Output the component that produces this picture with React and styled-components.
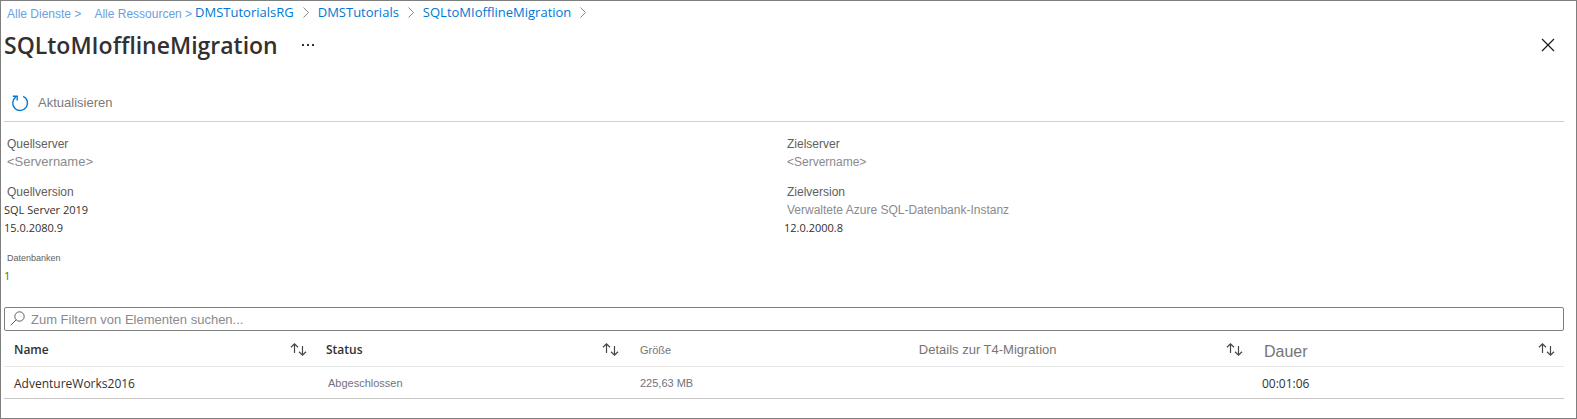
import React from "react";
import styled, { createGlobalStyle } from "styled-components";

const ui = `"Open Sans", "Noto Sans", sans-serif`;
const plain = `"Liberation Sans", Arial, sans-serif`;

const GlobalStyle = createGlobalStyle`
  *, *::before, *::after { box-sizing: border-box; }
  body { margin: 0; background: #fff; color: #323130; font-family: ${ui}; }
  button { border: 0; padding: 0; background: none; font: inherit; color: inherit; cursor: pointer; }
`;

const Blade = styled.main`
  min-height: 100vh;
  padding: 0 12px 12px 3px;
  border: 1px solid #7f7f7f;
`;

const Breadcrumb = styled.nav`
  display: flex;
  align-items: flex-start;
  height: 24px;
  padding-left: 3px;
`;

const Crumb = styled.a`
  margin-right: ${(p) => p.$gap || 0}px;
  font-family: ${(p) => (p.$light ? plain : ui)};
  font-size: ${(p) => (p.$light ? 12 : 13)}px;
  line-height: ${(p) => (p.$light ? 26 : 22)}px;
  color: ${(p) => (p.$light ? "#6ba0dc" : "#0078d4")};
  text-decoration: none;
  white-space: nowrap;
`;

const Chevron = styled.svg`
  width: 6px;
  height: 22px;
  margin: 0 9px;
  fill: none;
  stroke: #8a8886;
`;

const TitleBar = styled.header`
  display: flex;
  align-items: center;
  height: 40px;
`;

const Title = styled.h1`
  margin: 0 24px 0 0;
  font-size: 23px;
  font-weight: 600;
  line-height: 32px;
`;

const MoreButton = styled.button`
  display: flex;
  svg { width: 12px; height: 4px; fill: #323130; }
`;

const CloseButton = styled.button`
  display: flex;
  margin: 0 9px 0 auto;
  svg { width: 14px; height: 14px; stroke: #1b1a19; fill: none; }
`;

const Toolbar = styled.div`
  display: flex;
  align-items: center;
  height: 57px;
  padding: 20px 0 0 7px;
  border-bottom: 1px solid #d2d0ce;
`;

const RefreshButton = styled.button`
  display: flex;
  align-items: center;
  gap: 9px;
  font-family: ${plain};
  font-size: 13px;
  line-height: 20px;
  color: #7a7a7a;
  svg { width: 18px; height: 18px; stroke: #0078d4; fill: none; }
`;

const Essentials = styled.section`
  display: grid;
  grid-template-columns: 1fr 1fr;
  row-gap: 12px;
  padding: 13px 0 22px;
`;

const Fact = styled.dl`
  margin: 0;
  line-height: 18px;
`;

const FactLabel = styled.dt`
  padding-left: 3px;
  font-family: ${plain};
  font-size: ${(p) => (p.$small ? 9 : 12)}px;
  color: #605e5c;
`;

const FactValue = styled.dd`
  margin: 0;
  padding-left: ${(p) => (p.$soft ? 3 : 0)}px;
  font-family: ${(p) => (p.$soft ? plain : ui)};
  font-size: ${(p) => p.$size || (p.$soft ? 12 : 11)}px;
  color: ${(p) => (p.$soft ? "#8a8a8e" : p.$count ? "#2f7d32" : "#323130")};
`;

const SearchBox = styled.label`
  display: flex;
  align-items: center;
  gap: 6px;
  height: 24px;
  padding: 0 5px;
  border: 1px solid #7f7f7f;
  border-radius: 2px;
  svg { width: 15px; height: 17px; stroke: #605e5c; fill: none; }
`;

const SearchInput = styled.input`
  flex: 1;
  min-width: 0;
  padding: 2px 0 0;
  border: 0;
  outline: 0;
  font-family: ${plain};
  font-size: 13px;
  line-height: 20px;
  &::placeholder { color: #8a8a8e; opacity: 1; }
`;

const Table = styled.table`
  width: 100%;
  table-layout: fixed;
  border-collapse: separate;
  border-spacing: 0;
  text-align: left;
`;

const HeadCell = styled.th`
  width: ${(p) => p.$width}%;
  height: 36px;
  padding: 0 9px 0 ${(p) => (p.$inset ? 12 : 10)}px;
  border-bottom: 1px solid #e6e6e6;
  font-weight: 400;
`;

const HeadContent = styled.div`
  display: flex;
  align-items: center;
  justify-content: space-between;
  height: 20px;
`;

const ColumnName = styled.span`
  font-family: ${(p) => (p.$strong ? ui : plain)};
  font-size: ${(p) => p.$size || 13}px;
  font-weight: ${(p) => (p.$strong ? 600 : 400)};
  line-height: 20px;
  padding-top: ${(p) => (p.$size > 13 ? 6 : 2)}px;
  color: ${(p) => (p.$strong ? "#323130" : "#757575")};
`;

const SortButton = styled.button`
  display: flex;
  padding-top: 2px;
  svg { width: 17px; height: 13px; stroke: #484644; fill: none; }
`;

const Cell = styled.td`
  height: 32px;
  padding: ${(p) => (p.$soft ? "0 10px 0 12px" : "2px 10px 0")};
  border-bottom: 1px solid #c8c6c4;
  font-family: ${(p) => (p.$soft ? plain : ui)};
  font-size: ${(p) => (p.$soft ? 11 : 12)}px;
  line-height: 20px;
  color: ${(p) => (p.$soft ? "#73717d" : "#323130")};
`;

const Separator = () => (
  <Chevron viewBox="0 0 6 22" aria-hidden="true">
    <path d="M.5 6.5 5.5 11.5 .5 16.5" />
  </Chevron>
);

const columns = [
  { name: "Name", width: 20, strong: true, size: 12, sortable: true },
  { name: "Status", width: 20, strong: true, size: 12, sortable: true },
  { name: "Größe", width: 18, size: 11, inset: true },
  { name: "Details zur T4-Migration", width: 22, sortable: true },
  { name: "Dauer", width: 20, size: 16, inset: true, sortable: true },
];

export default function App() {
  return (
    <>
      <GlobalStyle />
      <Blade>
        <Breadcrumb aria-label="Breadcrumb">
          <Crumb href="#" $light $gap={13}>Alle Dienste &gt;</Crumb>
          <Crumb href="#" $light $gap={3}>Alle Ressourcen &gt;</Crumb>
          <Crumb href="#">DMSTutorialsRG</Crumb>
          <Separator />
          <Crumb href="#">DMSTutorials</Crumb>
          <Separator />
          <Crumb href="#">SQLtoMIofflineMigration</Crumb>
          <Separator />
        </Breadcrumb>

        <TitleBar>
          <Title>SQLtoMIofflineMigration</Title>
          <MoreButton type="button" aria-label="Mehr">
            <svg viewBox="0 0 12 4">
              <path d="M0 1h2v2H0zM5 1h2v2H5zM10 1h2v2h-2z" />
            </svg>
          </MoreButton>
          <CloseButton type="button" aria-label="Schließen">
            <svg viewBox="0 0 14 14">
              <path d="m1 1 12 12M13 1 1 13" strokeWidth="1.2" />
            </svg>
          </CloseButton>
        </TitleBar>

        <Toolbar>
          <RefreshButton type="button">
            <svg viewBox="0 0 18 18" strokeWidth="1.4">
              <path d="M12.2 2.3A7.4 7.4 0 1 1 4.7 3.1" />
              <path d="M1.8 2.2h4.4v4.4" />
            </svg>
            Aktualisieren
          </RefreshButton>
        </Toolbar>

        <Essentials>
          <Fact>
            <FactLabel>Quellserver</FactLabel>
            <FactValue $soft $size={13}>&lt;Servername&gt;</FactValue>
          </Fact>
          <Fact>
            <FactLabel>Zielserver</FactLabel>
            <FactValue $soft>&lt;Servername&gt;</FactValue>
          </Fact>
          <Fact>
            <FactLabel>Quellversion</FactLabel>
            <FactValue>SQL Server 2019</FactValue>
            <FactValue>15.0.2080.9</FactValue>
          </Fact>
          <Fact>
            <FactLabel>Zielversion</FactLabel>
            <FactValue $soft>Verwaltete Azure SQL-Datenbank-Instanz</FactValue>
            <FactValue>12.0.2000.8</FactValue>
          </Fact>
          <Fact>
            <FactLabel $small>Datenbanken</FactLabel>
            <FactValue $count>1</FactValue>
          </Fact>
        </Essentials>

        <SearchBox>
          <svg viewBox="0 0 15 17" aria-hidden="true">
            <circle cx="9.5" cy="5.5" r="4.7" />
            <path d="M6.2 8.8.7 14.3" />
          </svg>
          <SearchInput
            type="text"
            aria-label="Elemente filtern"
            placeholder="Zum Filtern von Elementen suchen..."
          />
        </SearchBox>

        <Table>
          <thead>
            <tr>
              {columns.map((c) => (
                <HeadCell key={c.name} scope="col" $width={c.width} $inset={c.inset}>
                  <HeadContent>
                    <ColumnName $strong={c.strong} $size={c.size}>{c.name}</ColumnName>
                    {c.sortable && (
                      <SortButton type="button" aria-label={`${c.name} sortieren`}>
                        <svg viewBox="0 0 17 13" strokeWidth="1.2">
                          <path d="M4.5 10V1M1 4.3 4.5.9 8 4.3" />
                          <path d="M12.5 3v9M9 8.7l3.5 3.4L16 8.7" />
                        </svg>
                      </SortButton>
                    )}
                  </HeadContent>
                </HeadCell>
              ))}
            </tr>
          </thead>
          <tbody>
            <tr>
              <Cell>AdventureWorks2016</Cell>
              <Cell $soft>Abgeschlossen</Cell>
              <Cell $soft>225,63 MB</Cell>
              <Cell />
              <Cell>00:01:06</Cell>
            </tr>
          </tbody>
        </Table>
      </Blade>
    </>
  );
}
